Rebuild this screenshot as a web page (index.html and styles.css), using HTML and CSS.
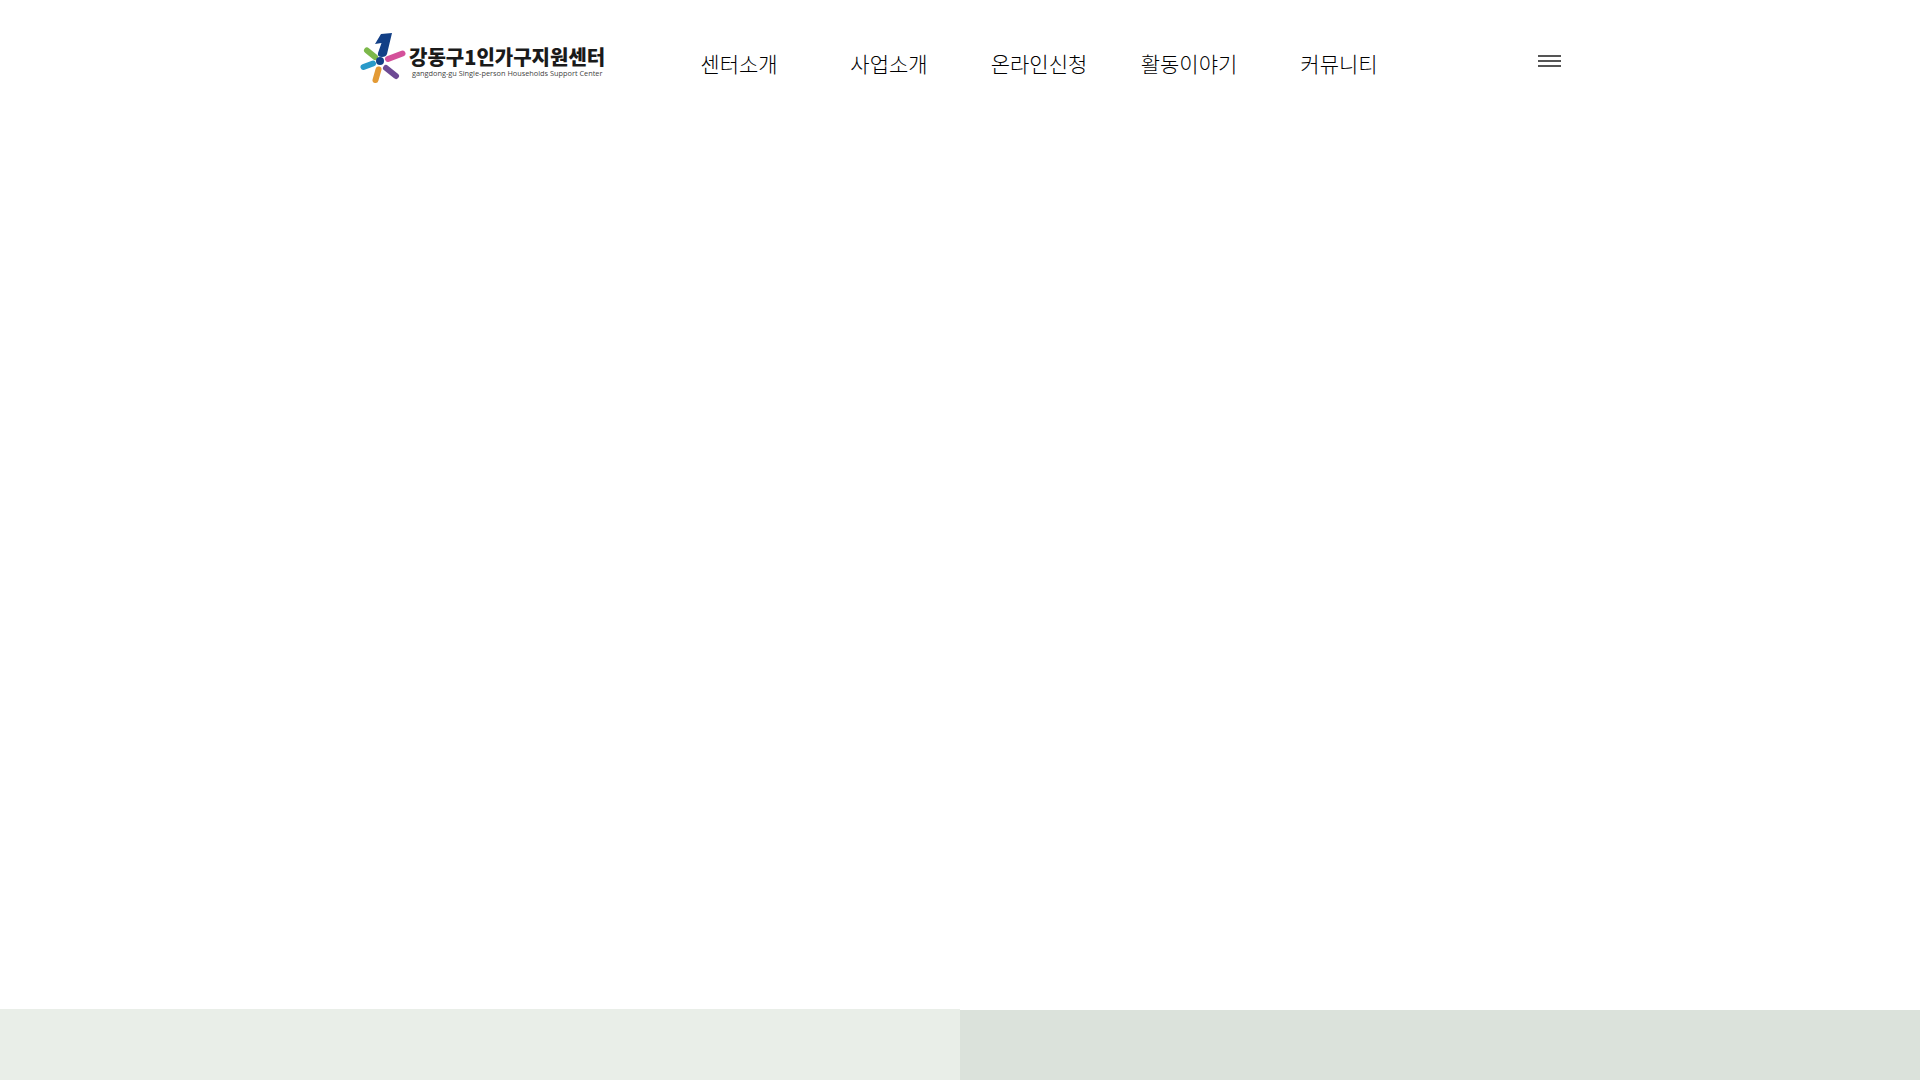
FILE: index.html
```html
<!DOCTYPE html>
<html lang="ko">

<head>
    <meta charset="UTF-8">
    <meta name="viewport" content="width=device-width, initial-scale=1.0">
    <title>강동구1인가구지원센터</title>
    <link rel="stylesheet" href="styles.css">
</head>

<body>
    <div class="page">
        <header class="header">
            <a class="logo" href="#">
                <svg class="logo-mark" width="46" height="52" viewBox="360 32 46 52" aria-hidden="true">
                    <path d="M381 34 L392 33 L387 54 Q386 57 382 57 Q377 57 378 53 L381.500 43 L375 44 Z" fill="#123f86" />
                    <line x1="367" y1="50.500" x2="375" y2="57" stroke="#7cb84a" stroke-width="6" stroke-linecap="round" />
                    <line x1="388" y1="59" x2="402.500" y2="53.500" stroke="#d4509a" stroke-width="6" stroke-linecap="round" />
                    <line x1="363.500" y1="67" x2="373" y2="63.500" stroke="#2a9ac9" stroke-width="6" stroke-linecap="round" />
                    <line x1="378.500" y1="69.500" x2="375.500" y2="80" stroke="#e39a35" stroke-width="6" stroke-linecap="round" />
                    <line x1="386" y1="68" x2="396" y2="76" stroke="#6d4a94" stroke-width="6" stroke-linecap="round" />
                    <circle cx="380" cy="61" r="4" fill="#123f86" />
                </svg>
                <span class="logo-text">
                    <span class="logo-title">강동구1인가구지원센터</span>
                    <span class="logo-sub">gangdong-gu Single-person Households Support Center</span>
                </span>
            </a>
            <nav class="gnb">
                <a href="#">센터소개</a>
                <a href="#">사업소개</a>
                <a href="#">온라인신청</a>
                <a href="#">활동이야기</a>
                <a href="#">커뮤니티</a>
            </nav>
            <button class="menu-btn" aria-label="메뉴">
                <span></span>
                <span></span>
                <span></span>
            </button>
        </header>
        <main class="main"></main>
        <div class="bands">
            <div class="band band-left"></div>
            <div class="band band-right"></div>
        </div>
    </div>
</body>

</html>
```

FILE: styles.css
```css
* {
    box-sizing: border-box;
}

body {
    margin: 0;
    background: #fff;
    color: #222;
    font-family: "Noto Sans CJK KR", "Noto Sans", sans-serif;
    overflow: hidden;
}

a {
    color: inherit;
    text-decoration: none;
}

.page {
    display: flex;
    flex-direction: column;
    height: 100vh;
}

.header {
    display: flex;
    align-items: flex-start;
    width: 1200px;
    height: 100px;
    margin: 0 auto;
    padding-top: 32px;
}

.logo {
    display: flex;
    flex: none;
    align-items: flex-start;
    gap: 3px;
    width: 304px;
}

.logo-mark {
    flex: none;
}

.logo-text {
    display: flex;
    flex-direction: column;
    padding-top: 13px;
}

.logo-title {
    font-size: 20px;
    font-weight: 900;
    line-height: 24px;
    color: #1a1a1a;
    white-space: nowrap;
}

.logo-sub {
    padding-left: 3px;
    font-family: "Open Sans", sans-serif;
    font-size: 7.35px;
    font-weight: 500;
    line-height: 8px;
    color: #444;
    white-space: nowrap;
}

.gnb {
    display: flex;
    flex: none;
    width: 750px;
    padding-top: 16px;
}

.gnb a {
    width: 150px;
    font-size: 21px;
    font-weight: 300;
    line-height: 30px;
    text-align: center;
    color: #000;
}

.menu-btn {
    display: flex;
    flex: none;
    flex-direction: column;
    gap: 3px;
    width: 23px;
    margin: 23px 0 0 124px;
    padding: 0;
    border: 0;
    background: none;
    cursor: pointer;
}

.menu-btn span {
    display: block;
    height: 2px;
    background: #555;
}

.main {
    flex: 1;
}

.bands {
    display: flex;
    height: 71px;
}

.band {
    flex: 1;
}

.band-left {
    background: #e9eee8;
}

.band-right {
    margin-top: 1px;
    background: #dbe2db;
}
```
